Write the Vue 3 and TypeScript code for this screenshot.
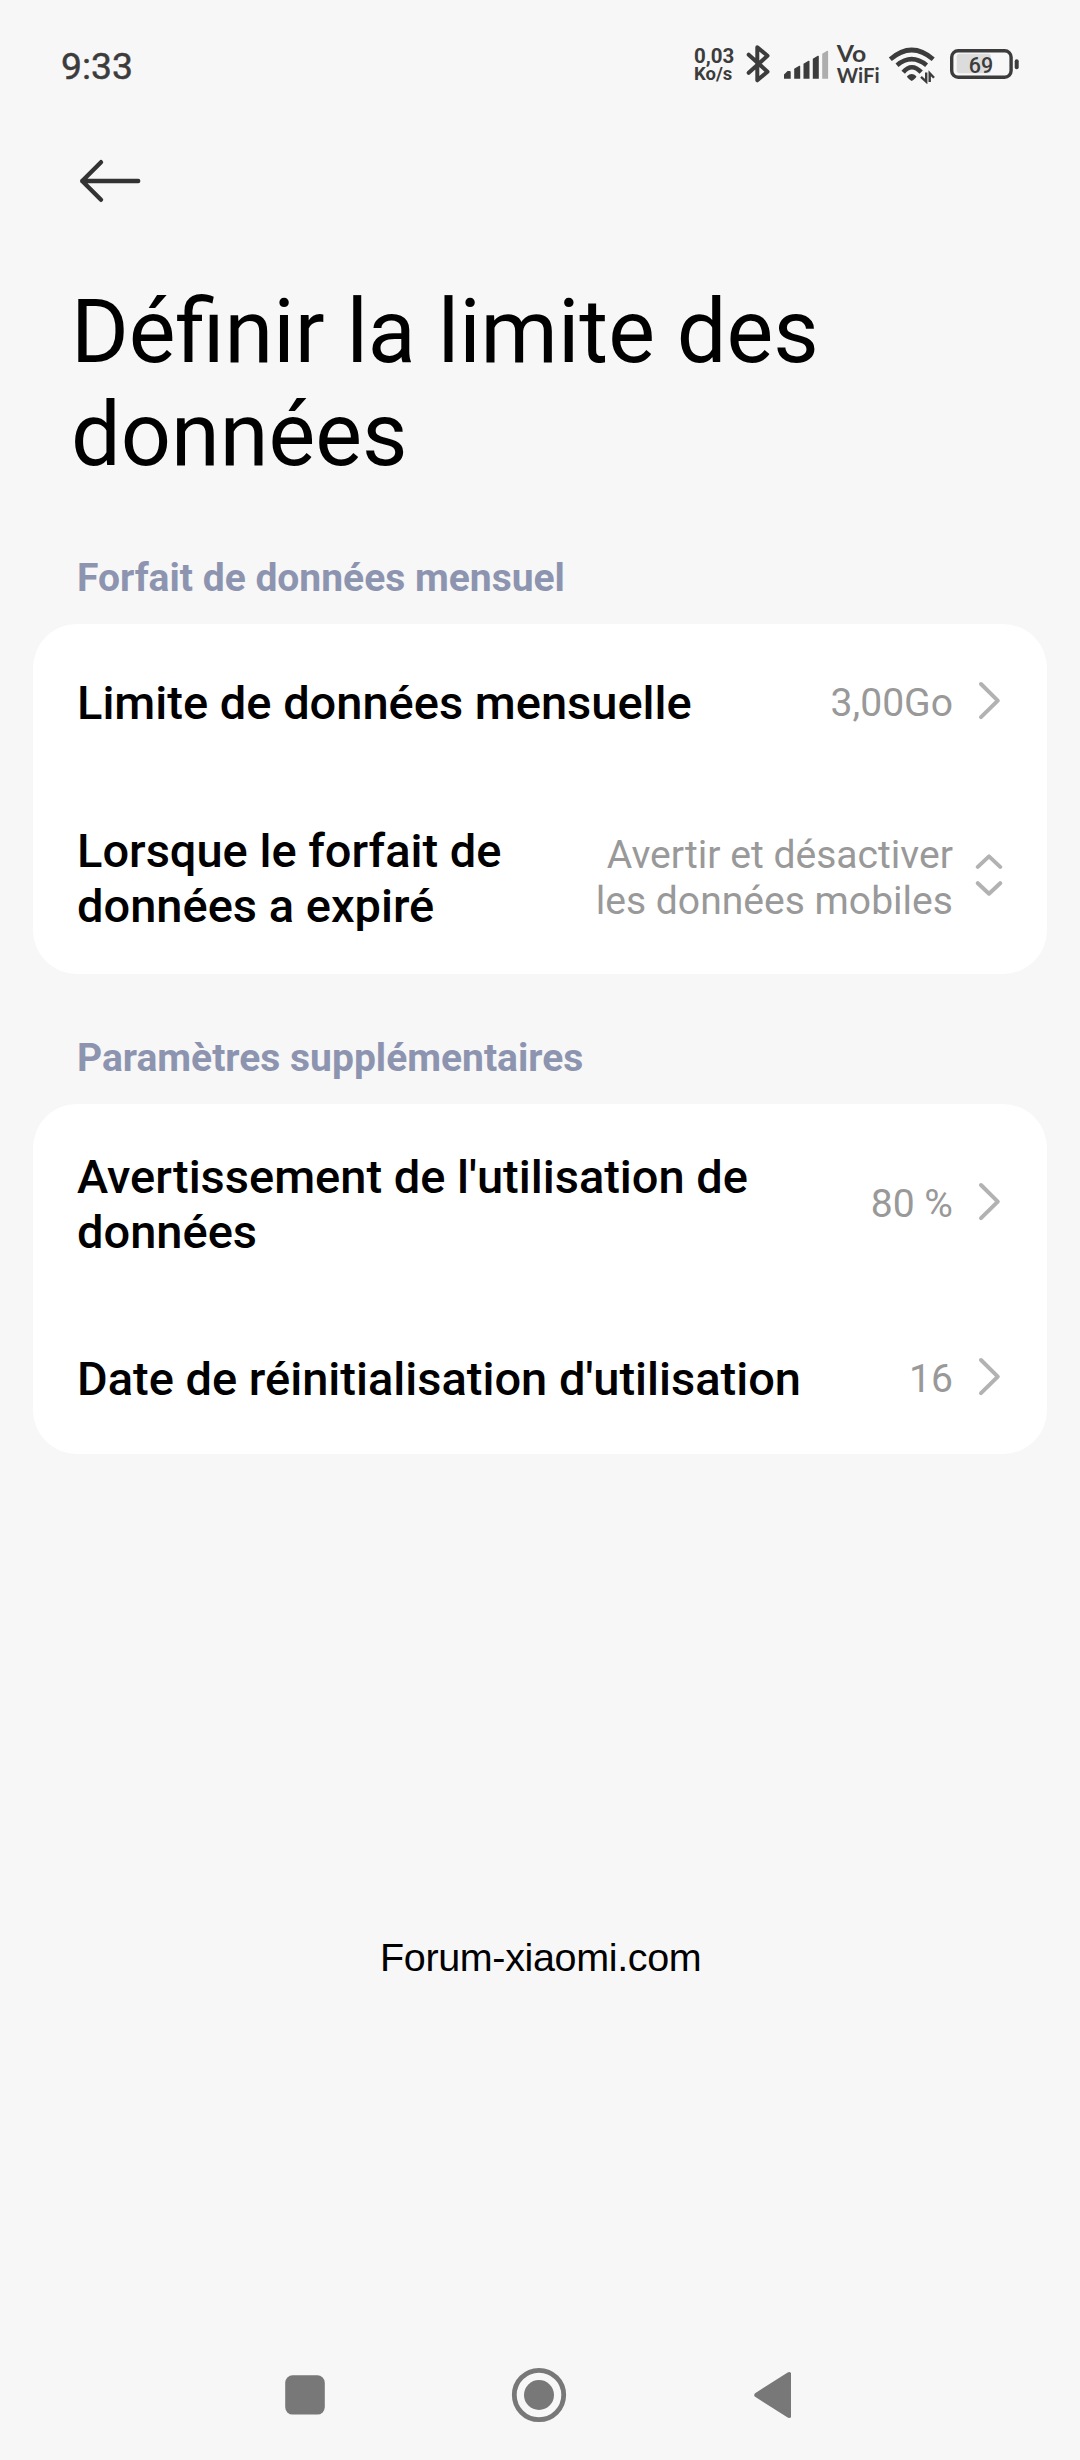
<script setup lang="ts">
interface Row {
  title: string
  value: string
  kind: 'link' | 'picker'
  size: string
}

interface Section {
  label: string
  rows: Row[]
}

const sections: Section[] = [
  {
    label: 'Forfait de données mensuel',
    rows: [
      { title: 'Limite de données mensuelle', value: '3,00Go', kind: 'link', size: 'h158' },
      {
        title: 'Lorsque le forfait de\ndonnées a expiré',
        value: 'Avertir et désactiver\nles données mobiles',
        kind: 'picker',
        size: 'h192',
      },
    ],
  },
  {
    label: 'Paramètres supplémentaires',
    rows: [
      { title: "Avertissement de l'utilisation de\ndonnées", value: '80 %', kind: 'link', size: 'h200' },
      { title: "Date de réinitialisation d'utilisation", value: '16', kind: 'link', size: 'h150' },
    ],
  },
]
</script>

<template>
  <div class="screen">
    <header class="status">
      <span class="clock">9:33</span>
      <div class="indicators">
        <div class="speed">
          <span class="rate">0,03</span>
          <span class="unit">Ko/s</span>
        </div>
        <svg class="ic-bt" width="26" height="40" viewBox="745 44 26 40" fill="none" stroke="#3c3c3c" stroke-width="4" stroke-linecap="round" stroke-linejoin="round">
          <path d="M748.7 54.7 767.5 71.7 757.3 80.3V47.2L767.5 55.8 748.7 72.8" />
        </svg>
        <svg class="ic-signal" width="46" height="40" viewBox="783 44 46 40" fill="#3c3c3c" stroke-linejoin="round">
          <path d="M784 78.7v-4.2l3.6-3.5h2.1q1 0 1 1v6.7z" />
          <path d="M794.2 78.7v-10l5-3q1-.3 1 .8v12.2z" />
          <path d="M803.5 78.7v-15l5-3q1-.3 1 .8v17.2z" />
          <path d="M812.8 78.7v-20l5-3q1-.3 1 .8v22.2z" />
          <path d="M822.2 78.7v-25l4.9-3q1-.3 1 .8v27.2z" fill="#adadad" />
        </svg>
        <svg class="ic-vowifi" width="46" height="52" viewBox="835 38 46 52" fill="#3c3c3c">
          <text x="836.8" y="62" font-size="23" textLength="29.5" lengthAdjust="spacingAndGlyphs">Vo</text>
          <text x="836.8" y="82.6" font-size="21.5" textLength="43" lengthAdjust="spacingAndGlyphs">WiFi</text>
        </svg>
        <svg class="ic-wifi" width="48" height="40" viewBox="888 44 48 40" fill="none" stroke="#3c3c3c">
          <path d="M890.3 59.3Q911.7 40.7 933.2 59.3" stroke-width="4.6" />
          <path d="M897 65.2Q911.7 53 926.6 65.2" stroke-width="4.6" />
          <path d="M903.2 72.2Q911.7 62.2 921.2 72.2" stroke-width="4.6" />
          <path d="M907 76.3Q911.7 71.7 916.4 76.3Q916 78.6 911.7 81Q907.5 78.6 907 76.3z" fill="#3c3c3c" stroke="none" />
          <path d="M926.2 72.6V81.6L921 76.8M929.7 82V73.2L934 77.8" stroke-width="2.4" />
        </svg>
        <svg class="ic-battery" width="70" height="32" viewBox="949 48 70 32">
          <rect x="956.7" y="53.7" width="34.3" height="19.5" rx="3" fill="#dcdcdc" />
          <rect x="951.7" y="50.7" width="59.4" height="26.6" rx="6.5" fill="none" stroke="#3c3c3c" stroke-width="3.4" />
          <rect x="1014.7" y="59.2" width="4" height="10" rx="2" fill="#3c3c3c" />
          <text x="981" y="72.6" font-size="21.5" text-anchor="middle" fill="#3c3c3c">69</text>
        </svg>
      </div>
    </header>

    <div class="toolbar">
      <svg width="64" height="44" viewBox="78 159 64 44" fill="none" stroke="#333" stroke-width="4.4" stroke-linecap="round" stroke-linejoin="round">
        <path d="M101 162.2 82.2 181 101 199.8M82.2 181H138.2" />
      </svg>
    </div>

    <h1 class="title">Définir la limite des<br />données</h1>

    <section v-for="section in sections" :key="section.label" class="section">
      <h2 class="label">{{ section.label }}</h2>
      <div class="card">
        <div v-for="row in section.rows" :key="row.title" class="row" :class="row.size">
          <span class="row-title">{{ row.title }}</span>
          <span class="row-value">{{ row.value }}</span>
          <svg v-if="row.kind === 'link'" class="row-icon" width="28" height="44" viewBox="0 0 28 44">
            <path d="M6 5 22.8 21.6 6 38.2" />
          </svg>
          <svg v-else class="row-icon" width="28" height="44" viewBox="0 0 28 44">
            <path d="M2.8 12.9 14 2.4 25.2 12.9M2.8 29.2 14 39.7 25.2 29.2" />
          </svg>
        </div>
      </div>
    </section>

    <p class="watermark">Forum-xiaomi.com</p>

    <nav class="nav">
      <svg width="40" height="56" viewBox="0 0 40 56"><rect x="0.2" y="8.2" width="39.6" height="39.4" rx="7.5" fill="#787878" /></svg>
      <svg width="56" height="56" viewBox="0 0 56 56">
        <circle cx="28" cy="28" r="24.7" fill="none" stroke="#787878" stroke-width="4.8" />
        <circle cx="28" cy="28" r="15" fill="#787878" />
      </svg>
      <svg width="38" height="56" viewBox="0 0 38 56"><path d="M3.8 28 36 7.6V48.4z" fill="#787878" stroke="#787878" stroke-width="5" stroke-linejoin="round" /></svg>
    </nav>
  </div>
</template>

<style>
body {
  margin: 0;
  background: #f7f7f7;
}
</style>

<style scoped>
.screen {
  width: 1080px;
  height: 2460px;
  display: flex;
  flex-direction: column;
  background: #f7f7f7;
  font-family: Roboto, 'Noto Sans', sans-serif;
  color: #000;
  overflow: hidden;
}

svg {
  display: block;
  flex: none;
}

.status {
  display: flex;
  justify-content: space-between;
  align-items: flex-start;
  height: 84px;
  padding: 44px 61px 0 61px;
  box-sizing: border-box;
  color: #3c3c3c;
}

.clock {
  margin-top: 1px;
  font-size: 37.3px;
  line-height: 42px;
  font-weight: 400;
  -webkit-text-stroke: 0.5px #3c3c3c;
}

.indicators {
  display: flex;
  align-items: flex-start;
}

.speed {
  display: flex;
  flex-direction: column;
  width: 51px;
  font-weight: 700;
}

.rate {
  font-size: 20.5px;
  line-height: 20px;
  height: 19px;
  margin-top: 2px;
}

.unit {
  font-size: 18.5px;
  line-height: 18px;
}

.ic-signal {
  margin-left: 12px;
}

.ic-vowifi {
  margin: -6px 0 0 6px;
  font-family: Lato, sans-serif;
  font-weight: 700;
}

.ic-wifi {
  margin-left: 7px;
}

.ic-battery {
  margin: 4px 0 0 13px;
  font-weight: 500;
}

.toolbar {
  height: 197px;
  padding: 75px 78px 0;
  box-sizing: border-box;
}

.title {
  margin: 0;
  padding-left: 71px;
  height: 273px;
  font-size: 88.2px;
  line-height: 103px;
  font-weight: 400;
}

.section {
  height: 480px;
  flex: none;
}

.label {
  margin: 0;
  padding-left: 77px;
  height: 70px;
  font-size: 39px;
  line-height: 48px;
  font-weight: 700;
  color: #8d94b0;
}

.card {
  margin: 0 33px;
  background: #fff;
  border-radius: 44px;
}

.row {
  display: flex;
  align-items: center;
  padding: 0 44px;
}

.h158 { height: 158px; }
.h192 { height: 192px; }
.h200 { height: 200px; }
.h150 { height: 150px; }

.row-title {
  flex: 1;
  font-size: 47px;
  line-height: 55px;
  font-weight: 500;
  white-space: pre;
}

.h158 .row-title,
.h150 .row-title {
  margin-bottom: 2px;
}

.row-value {
  font-size: 39.1px;
  line-height: 46px;
  color: #999;
  text-align: right;
  white-space: pre;
}

.row-icon {
  margin: -5px 0 0 22px;
  fill: none;
  stroke: #b2b2b2;
  stroke-width: 4;
  stroke-linecap: round;
  stroke-linejoin: round;
}

.h200 .row-icon {
  margin-top: -4px;
}

.watermark {
  margin: 421px 0 0 380px;
  font-family: 'Liberation Sans', Arial, sans-serif;
  font-size: 39.5px;
  line-height: 44px;
  letter-spacing: -0.35px;
  white-space: nowrap;
}

.nav {
  display: flex;
  align-items: center;
  gap: 186px;
  margin-top: auto;
  height: 130px;
  padding-left: 285px;
}
</style>
